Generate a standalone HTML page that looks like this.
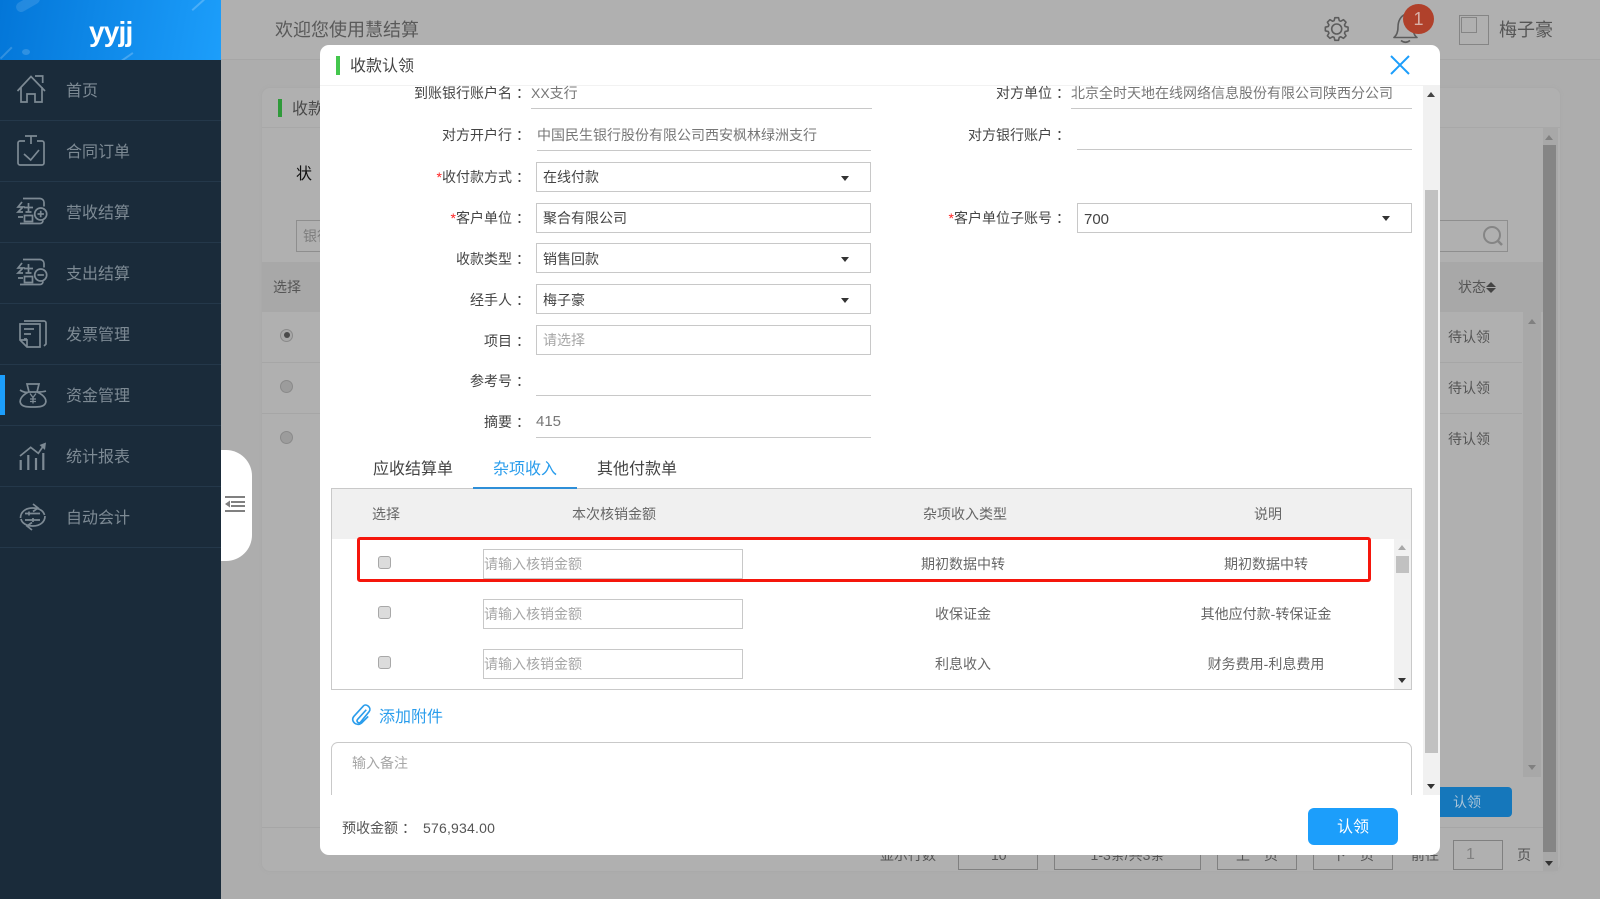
<!DOCTYPE html>
<html lang="zh-CN"><head><meta charset="utf-8"><title>收款认领</title>
<style>
html,body{margin:0;padding:0}
body{position:relative;width:1600px;height:899px;overflow:hidden;background:#adadad;font-family:"Liberation Sans","Noto Sans CJK SC",sans-serif;font-size:14px;color:#666}
div,span.t{box-sizing:border-box}
i{font-style:normal;position:relative;left:4px}
.a{position:absolute}
.t{position:absolute;white-space:nowrap;line-height:20px;height:20px}
.r{text-align:right}
.l{color:#555}
.nav{position:absolute;left:66px;color:#7d8a94;font-size:16px;line-height:20px;white-space:nowrap}
.sep{position:absolute;left:0;width:221px;height:1px;background:#24384a}
.box{position:absolute;border:1px solid #c8c8c8;background:#fff;height:30px}
.ul{position:absolute;height:1px;background:#c8c8c8}
.car{position:absolute;width:0;height:0;border-left:4.5px solid transparent;border-right:4.5px solid transparent;border-top:5px solid #333}
.up{position:absolute;width:0;height:0;border-left:4.5px solid transparent;border-right:4.5px solid transparent;border-bottom:5px solid #444}
.cb{position:absolute;left:378px;width:13px;height:13px;background:#dcdcdc;border:1px solid #a8a8a8;border-radius:3px}
.ph{color:#a6a6a6}
.c{text-align:center}
.req{color:#f22}
.dimbox{position:absolute;border:1px solid #808080;height:30px;top:840px}
.rad{position:absolute;left:280px;width:13px;height:13px;border-radius:50%;background:#9c9c9c;border:1px solid #8a8a8a}
</style></head><body>

<!-- dimmed page -->
<div class="a" style="left:221px;top:0;width:1379px;height:60px;background:#b0b0b0;border-bottom:1px solid #a6a6a6"></div>
<div class="t" style="left:275px;top:20px;font-size:18px;color:#595959">欢迎您使用慧结算</div>
<svg class="a" style="left:1320px;top:5px" width="110" height="42" viewBox="1320 5 110 42" fill="none" stroke="#5c5c5c" stroke-width="1.6" stroke-linejoin="round">
<path transform="translate(1336.7 29)" d="M-2.57-8.42L-1.8-11.36 1.8-11.36 2.57-8.42 4.13-7.77 6.76-9.3 9.3-6.76 7.77-4.13 8.42-2.57 11.36-1.8 11.36 1.8 8.42 2.57 7.77 4.13 9.3 6.76 6.76 9.3 4.13 7.77 2.57 8.42 1.8 11.36-1.8 11.36-2.57 8.42-4.13 7.77-6.76 9.3-9.3 6.76-7.77 4.13-8.42 2.57-11.36 1.8-11.36-1.8-8.42-2.57-7.77-4.13-9.3-6.76-6.76-9.3-4.13-7.77Z"/>
<circle cx="1336.7" cy="29" r="5"/>
<path d="M1406 14c-6 2-8 8-8 13 0 5-1 8-4 10.5h23c-2-1.500-3-3-3.500-6M1401 40.500q4.500 3.500 9 0"/>
</svg>
<div class="a" style="left:1403px;top:4px;width:31px;height:30px;border-radius:50%;background:#b0412b;color:#d8b0a8;font-size:18px;line-height:30px;text-align:center">1</div>
<div class="a" style="left:1459px;top:15px;width:30px;height:30px;border:1px solid #858585"></div>
<div class="a" style="left:1461px;top:17px;width:16px;height:16px;border:1px solid #858585"></div>
<div class="t" style="left:1499px;top:20px;font-size:18px;color:#555">梅子豪</div>

<!-- card -->
<div class="a" style="left:262px;top:88px;width:1298px;height:783px;background:#b0b0b0;border-radius:8px;box-shadow:0 0 3px #a6a6a6"></div>
<div class="a" style="left:262px;top:127px;width:1298px;height:1px;background:#a8a8a8"></div>
<div class="a" style="left:278px;top:99px;width:4px;height:18px;background:#2f9a3a"></div>
<div class="t" style="left:292px;top:100px;font-size:16px;color:#4a4a4a">收款认领</div>
<div class="t" style="left:296px;top:165px;font-size:16px;color:#111">状</div>
<div class="a" style="left:296px;top:220px;width:1212px;height:32px;border:1px solid #8e8e8e"></div>
<div class="t" style="left:303px;top:226px;color:#7d7d7d">银行</div>
<svg class="a" style="left:1480px;top:224px" width="26" height="24" fill="none" stroke="#858585" stroke-width="2"><circle cx="12" cy="11" r="8"/><path d="M18 17l4 4" stroke-width="2.6"/></svg>
<div class="a" style="left:262px;top:262px;width:1281px;height:50px;background:#a8a8a8"></div>
<div class="t" style="left:273px;top:277px;color:#555">选择</div>
<div class="t" style="left:1458px;top:277px;color:#555">状态</div>
<div class="up" style="left:1486px;top:282px;border-width:0 5px 5px;border-color:transparent transparent #444"></div>
<div class="car" style="left:1486px;top:288px;border-width:5px 5px 0;border-color:#444 transparent transparent"></div>
<div class="a" style="left:262px;top:362px;width:1260px;height:1px;background:#a6a6a6"></div>
<div class="a" style="left:262px;top:413px;width:1260px;height:1px;background:#a6a6a6"></div>
<div class="rad" style="top:329px;background:#a8a8a8"></div>
<div class="a" style="left:283.5px;top:332px;width:6px;height:6px;border-radius:50%;background:#4a4a4a"></div>
<div class="rad" style="top:380px"></div>
<div class="rad" style="top:431px"></div>
<div class="t" style="left:1448px;top:327px;color:#555">待认领</div>
<div class="t" style="left:1448px;top:378px;color:#555">待认领</div>
<div class="t" style="left:1448px;top:429px;color:#555">待认领</div>
<div class="a" style="left:1523px;top:312px;width:18px;height:465px;background:#a8a8a8"></div>
<div class="up" style="left:1528px;top:319px;border-bottom-color:#808080"></div>
<div class="car" style="left:1528px;top:765px;border-top-color:#808080"></div>
<div class="a" style="left:1543px;top:128px;width:15px;height:743px;background:#a8a8a8"></div>
<div class="a" style="left:1543px;top:145px;width:13px;height:707px;background:#858585"></div>
<div class="up" style="left:1545px;top:135px;border-bottom-color:#808080"></div>
<div class="car" style="left:1545px;top:861px;border-top-color:#333"></div>
<div class="a" style="left:1400px;top:787px;width:112px;height:30px;background:#1577bb;border-radius:4px"></div>
<div class="t" style="left:1453px;top:792px;color:#a9c4d8">认领</div>
<div class="a" style="left:262px;top:827px;width:1281px;height:1px;background:#a6a6a6"></div>
<div class="dimbox" style="left:958px;width:80px"></div>
<div class="t" style="left:991px;top:845px;color:#555">10</div>
<div class="t" style="left:880px;top:845px;color:#555">显示行数</div>
<div class="dimbox" style="left:1054px;width:147px"></div>
<div class="t c" style="left:1054px;width:147px;top:845px;color:#555">1-3条/共3条</div>
<div class="dimbox" style="left:1217px;width:80px"></div>
<div class="t c" style="left:1217px;width:80px;top:845px;color:#555">上一页</div>
<div class="dimbox" style="left:1313px;width:80px"></div>
<div class="t c" style="left:1313px;width:80px;top:845px;color:#555">下一页</div>
<div class="t" style="left:1411px;top:845px;color:#555">前往</div>
<div class="dimbox" style="left:1453px;width:50px"></div>
<div class="t" style="left:1466px;top:845px;font-size:16px;color:#808080">1</div>
<div class="t" style="left:1517px;top:845px;color:#555">页</div>

<!-- sidebar -->
<div class="a" style="left:0;top:0;width:221px;height:899px;background:#1a2b3a"></div>
<div class="a" style="left:0;top:0;width:221px;height:60px;background:linear-gradient(100deg,#0376d8,#1c9efb);overflow:hidden">
<div class="a" style="left:15px;top:-2px;width:26px;height:10px;background:rgba(255,255,255,.12);border-radius:6px;transform:rotate(-30deg)"></div>
<div class="a" style="left:22px;top:49px;width:8px;height:6px;background:rgba(255,255,255,.16);border-radius:50%"></div>
<div class="a" style="left:-2px;top:52px;width:16px;height:1.5px;background:rgba(255,255,255,.18);transform:rotate(-45deg)"></div>
<div class="a" style="left:190px;top:4px;width:16px;height:1.5px;background:rgba(255,255,255,.22);transform:rotate(-42deg)"></div>
<div class="a" style="left:120px;top:56px;width:14px;height:1.5px;background:rgba(255,255,255,.22);transform:rotate(-35deg)"></div>
</div>
<div class="t" style="left:89px;top:16px;height:32px;line-height:32px;font-size:28px;font-weight:bold;color:#fff;letter-spacing:-.8px">yyjj</div>
<div class="sep" style="top:120px"></div><div class="sep" style="top:181px"></div><div class="sep" style="top:242px"></div><div class="sep" style="top:303px"></div><div class="sep" style="top:364px"></div><div class="sep" style="top:425px"></div><div class="sep" style="top:486px"></div><div class="sep" style="top:547px"></div>
<div class="a" style="left:0;top:375px;width:5px;height:40px;background:#1c9efb"></div>
<div class="nav" style="top:82px">首页</div>
<div class="nav" style="top:143px">合同订单</div>
<div class="nav" style="top:204px">营收结算</div>
<div class="nav" style="top:265px">支出结算</div>
<div class="nav" style="top:326px">发票管理</div>
<div class="nav" style="top:387px">资金管理</div>
<div class="nav" style="top:448px">统计报表</div>
<div class="nav" style="top:509px">自动会计</div>
<svg class="a" style="left:0;top:60px" width="60" height="480" viewBox="0 60 60 480" fill="none" stroke="#7d8a94" stroke-width="1.7">
<path d="M17.5 91L31 76.5 45 91M35 76h7.700v7M21 87v15h6v-8h8v8h7V87"/>
<path d="M25 141h-5a2 2 0 0 0-2 2v20a2 2 0 0 0 2 2h22a2 2 0 0 0 2-2v-20a2 2 0 0 0-2-2h-5M25 136h12M31 136v8M24 154l6.700 6L39 150"/>
<path d="M23 198.500h17a4 4 0 0 1 4 4v4M22 202l-4 5h5l-5 5h5M18 217h5M24 207.500h9M28.500 203v9M25.500 212h6M24.500 215.500h8v6h-8zM20 223.500h20a3 3 0 0 0 3-3"/>
<circle cx="40.700" cy="214" r="6"/><path d="M37.500 214h6.400M40.700 210.800v6.400"/>
<path d="M23 259.500h17a4 4 0 0 1 4 4v4M22 263l-4 5h5l-5 5h5M18 278h5M24 268.500h9M28.500 264v9M25.500 273h6M24.500 276.500h8v6h-8zM20 284.500h20a3 3 0 0 0 3-3"/>
<circle cx="40.700" cy="275" r="6"/><path d="M37.500 275h6.400"/>
<path d="M20 324h20v23H27l-7-7zM20 340h7v7M24 321h20a2 2 0 0 1 2 2v21l-2 2M24 329h10M24 334h7M24 339h3"/>
<path d="M27 384h12l-2 8H29zM20 390c3 2 6 3 9 2M46 391c-3 1-6 1-9 1M28.500 392c-8 4-9.500 9-7.500 12 2 3 7 3 12 3s10 0 12-3c2-3 1-8-8-12"/>
<path d="M30 393.500l3 4 3-4M33 397.500v6M30 399h6M30 401.500h6" stroke-width="1.300"/>
<path d="M20.700 470v-10M28.300 470v-15M36 470v-12M43.300 470v-17" stroke-width="2.200"/>
<path d="M20 456l10.700-8.700 7.600 6L44 445"/><path d="M46 442.500l-6.500 2.500 5.500 5z" fill="#7d8a94" stroke="none"/>
<path d="M20.500 518c0-6 5-10 12-10s11 3 12 7M33 504l5 4-5 3.500M45 516c0 6-5 10-12 10s-11-3-12-7M32 530l-5-4 5-3.500M25 513.500h15M25 520h15M29 511.500v4M33 518v4"/>
</svg>
<!-- collapse tab -->
<div class="a" style="left:221px;top:450px;width:31px;height:111px;background:#fff;border-radius:0 26px 26px 0"></div>
<svg class="a" style="left:224px;top:495px" width="22" height="18" fill="#808080"><rect x="1" y="1" width="20" height="2"/><rect x="7" y="6" width="14" height="2"/><rect x="7" y="10" width="14" height="2"/><rect x="1" y="15" width="20" height="2"/><path d="M1 9l5-3.500v7z"/></svg>

<!-- modal -->
<div class="a" style="left:320px;top:45px;width:1120px;height:810px;background:#fff;border-radius:9px"></div>
<div class="a" style="left:320px;top:85px;width:1120px;height:1px;background:#f2f2f2"></div>
<div class="a" style="left:336px;top:56px;width:4px;height:19px;background:#44c74d"></div>
<div class="t" style="left:350px;top:57px;font-size:16px;color:#444">收款认领</div>
<svg class="a" style="left:1389px;top:54px" width="24" height="24" fill="none" stroke="#1c9efb" stroke-width="2"><path d="M2 2l18 18M20 2L2 20"/></svg>
<!-- modal scrollbar -->
<div class="a" style="left:1423px;top:85px;width:17px;height:710px;background:#f1f1f1"></div>
<div class="a" style="left:1425px;top:190px;width:13px;height:563px;background:#c1c1c1"></div>
<div class="up" style="left:1427px;top:92px"></div>
<div class="car" style="left:1427px;top:784px"></div>

<!-- form left -->
<div class="t r" style="right:1074px;top:83px;color:#444">到账银行账户名<i>：</i></div>
<div class="t" style="left:531px;top:83px;color:#777">XX支行</div>
<div class="ul" style="left:531px;top:108px;width:341px"></div>
<div class="t r" style="right:1074px;top:125px;color:#444">对方开户行<i>：</i></div>
<div class="t" style="left:537px;top:125px;color:#777">中国民生银行股份有限公司西安枫林绿洲支行</div>
<div class="ul" style="left:537px;top:150px;width:334px"></div>
<div class="t r" style="right:1074px;top:167px;color:#444"><span class="req">*</span>收付款方式<i>：</i></div>
<div class="box" style="left:536px;top:162px;width:335px"></div>
<div class="t" style="left:543px;top:167px;color:#444">在线付款</div><div class="car" style="left:841px;top:176px"></div>
<div class="t r" style="right:1074px;top:208px;color:#444"><span class="req">*</span>客户单位<i>：</i></div>
<div class="box" style="left:536px;top:203px;width:335px"></div>
<div class="t" style="left:543px;top:208px;color:#444">聚合有限公司</div>
<div class="t r" style="right:1074px;top:249px;color:#444">收款类型<i>：</i></div>
<div class="box" style="left:536px;top:243px;width:335px"></div>
<div class="t" style="left:543px;top:249px;color:#444">销售回款</div><div class="car" style="left:841px;top:257px"></div>
<div class="t r" style="right:1074px;top:290px;color:#444">经手人<i>：</i></div>
<div class="box" style="left:536px;top:284px;width:335px"></div>
<div class="t" style="left:543px;top:290px;color:#444">梅子豪</div><div class="car" style="left:841px;top:298px"></div>
<div class="t r" style="right:1074px;top:331px;color:#444">项目<i>：</i></div>
<div class="box" style="left:536px;top:325px;width:335px"></div>
<div class="t ph" style="left:543px;top:330px">请选择</div>
<div class="t r" style="right:1074px;top:371px;color:#444">参考号<i>：</i></div>
<div class="ul" style="left:536px;top:395px;width:335px"></div>
<div class="t r" style="right:1074px;top:412px;color:#444">摘要<i>：</i></div>
<div class="t" style="left:536px;top:412px;font-size:15px;color:#777">415</div>
<div class="ul" style="left:536px;top:437px;width:335px"></div>

<!-- form right -->
<div class="t r" style="right:534px;top:83px;color:#444">对方单位<i>：</i></div>
<div class="t" style="left:1071px;top:83px;color:#777">北京全时天地在线网络信息股份有限公司陕西分公司</div>
<div class="ul" style="left:1071px;top:108px;width:341px"></div>
<div class="t r" style="right:534px;top:125px;color:#444">对方银行账户<i>：</i></div>
<div class="ul" style="left:1077px;top:149px;width:335px"></div>
<div class="t r" style="right:534px;top:208px;color:#444"><span class="req">*</span>客户单位子账号<i>：</i></div>
<div class="box" style="left:1077px;top:203px;width:335px"></div>
<div class="t" style="left:1084px;top:210px;font-size:15px;color:#444">700</div><div class="car" style="left:1382px;top:216px"></div>

<!-- tabs -->
<div class="t" style="left:373px;top:460px;font-size:16px;color:#444">应收结算单</div>
<div class="t" style="left:493px;top:460px;font-size:16px;color:#2a9dec">杂项收入</div>
<div class="t" style="left:597px;top:460px;font-size:16px;color:#444">其他付款单</div>

<!-- table -->
<div class="a" style="left:331px;top:488px;width:1081px;height:202px;border:1px solid #c9c9c9;background:#fff"></div>
<div class="a" style="left:332px;top:489px;width:1079px;height:50px;background:#f0f0f0"></div>
<div class="a" style="left:473px;top:487px;width:104px;height:2px;background:#2e8fd8"></div>
<div class="t" style="left:372px;top:504px">选择</div>
<div class="t" style="left:572px;top:504px">本次核销金额</div>
<div class="t" style="left:923px;top:504px">杂项收入类型</div>
<div class="t" style="left:1254px;top:504px">说明</div>
<div class="a" style="left:1394px;top:539px;width:17px;height:150px;background:#f1f1f1"></div>
<div class="a" style="left:1396px;top:556px;width:13px;height:17px;background:#c1c1c1"></div>
<div class="up" style="left:1398px;top:545px;border-bottom-color:#a8a8a8"></div>
<div class="car" style="left:1398px;top:678px"></div>

<div class="cb" style="top:556px"></div><div class="cb" style="top:606px"></div><div class="cb" style="top:656px"></div>
<div class="box" style="left:483px;top:549px;width:260px"></div>
<div class="box" style="left:483px;top:599px;width:260px"></div>
<div class="box" style="left:483px;top:649px;width:260px"></div>
<div class="t ph" style="left:484px;top:554px">请输入核销金额</div>
<div class="t ph" style="left:484px;top:604px">请输入核销金额</div>
<div class="t ph" style="left:484px;top:654px">请输入核销金额</div>
<div class="t c" style="left:863px;width:200px;top:554px">期初数据中转</div>
<div class="t c" style="left:863px;width:200px;top:604px">收保证金</div>
<div class="t c" style="left:863px;width:200px;top:654px">利息收入</div>
<div class="t c" style="left:1166px;width:200px;top:554px">期初数据中转</div>
<div class="t c" style="left:1166px;width:200px;top:604px">其他应付款-转保证金</div>
<div class="t c" style="left:1166px;width:200px;top:654px">财务费用-利息费用</div>
<div class="a" style="left:357px;top:537px;width:1014px;height:45px;border:3px solid #f5160c;border-radius:3px"></div>

<!-- attach -->
<svg class="a" style="left:350px;top:704px" width="22" height="22" viewBox="0 0 23 23" fill="none" stroke="#2a9dec" stroke-width="1.700"><path d="M17 6L8 16c-2 2 1 5 3 3L20 8c3-4-3-9-6-6L4 13c-4 5 3 11 8 7l7-7"/></svg>
<div class="t" style="left:379px;top:708px;font-size:16px;color:#2a9dec">添加附件</div>

<!-- remark -->
<div class="a" style="left:331px;top:742px;width:1081px;height:53px;border:1px solid #c9c9c9;border-bottom:0;border-radius:7px 7px 0 0"></div>
<div class="t ph" style="left:352px;top:753px">输入备注</div>

<!-- footer -->
<div class="t" style="left:342px;top:818px;color:#555">预收金额<i>：</i></div>
<div class="t" style="left:423px;top:818px;color:#555;letter-spacing:.2px">576,934.00</div>
<div class="a" style="left:1308px;top:808px;width:90px;height:37px;background:#1c9efb;border-radius:6px;color:#fff;font-size:16px;line-height:40px;text-align:center">认领</div>

</body></html>
